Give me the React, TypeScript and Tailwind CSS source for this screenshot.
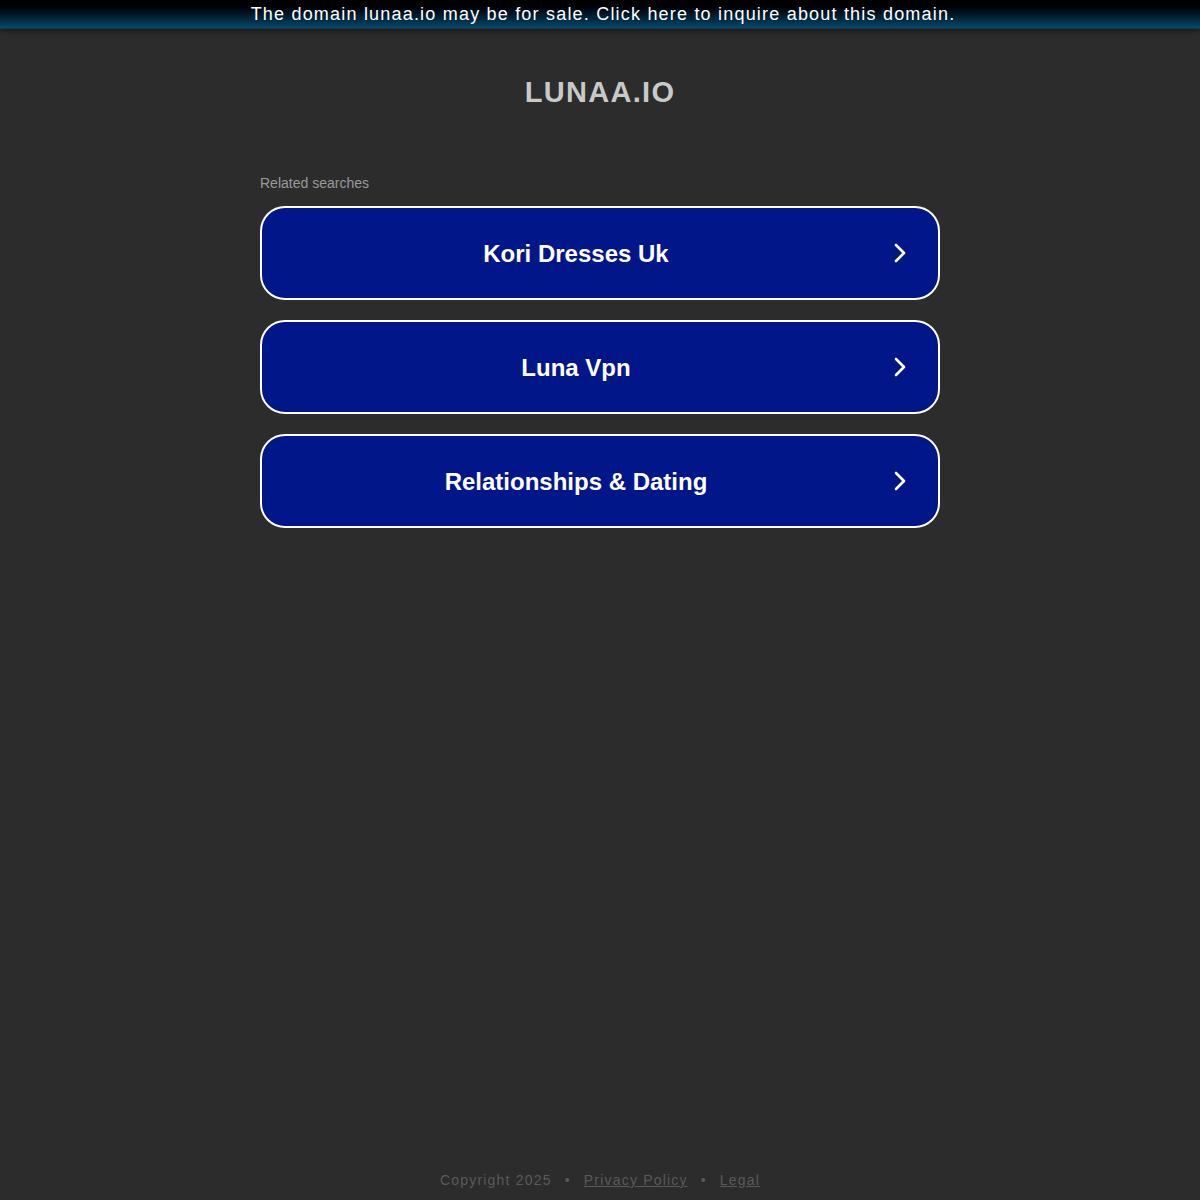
import React from 'react';

const searches = ['Kori Dresses Uk', 'Luna Vpn', 'Relationships & Dating'];

function Chevron() {
  return (
    <svg width="14" height="22" viewBox="0 0 14 22" fill="none" className="shrink-0">
      <path d="M3 3l8 8-8 8" stroke="#ffffff" strokeWidth="2.6" strokeLinecap="round" strokeLinejoin="round" />
    </svg>
  );
}

export default function App() {
  return (
    <div
      className="min-h-screen flex flex-col bg-[#2c2c2c]"
      style={{ fontFamily: '"Liberation Sans", Arial, sans-serif' }}
    >
      {/* Sale banner */}
      <div className="h-[29px] flex items-center justify-center pl-[6px] bg-gradient-to-b from-[#000000] to-[#044a6e] border-b border-[#16384a] shadow-[0_2px_6px_rgba(0,0,0,0.5)]">
        <a className="text-white text-[18px] tracking-[1.2px] leading-none cursor-pointer">
          The domain lunaa.io may be for sale. Click here to inquire about this domain.
        </a>
      </div>

      <div className="flex-1 w-[680px] mx-auto flex flex-col">
        {/* Title */}
        <h1 className="text-center text-[29px] font-bold text-[#c9c9c9] tracking-[1.3px] mt-[49px] leading-none">
          LUNAA.IO
        </h1>

        {/* Related searches */}
        <p className="text-[14px] text-[#9a9a9a] mt-[69px] mb-[16px] leading-none">Related searches</p>

        <div className="flex flex-col gap-[20px]">
          {searches.map((s) => (
            <a
              key={s}
              className="h-[94px] flex items-center rounded-[25px] border-2 border-white bg-[#011689] pr-[31px] cursor-pointer"
            >
              <span className="flex-1 text-center text-white text-[24px] font-bold pt-[2px]">{s}</span>
              <span className="ml-[3px] flex">
                <Chevron />
              </span>
            </a>
          ))}
        </div>
      </div>

      {/* Footer */}
      <footer className="pb-[9px] text-center text-[14px] text-[#5a5a5a] tracking-[1.2px]">
        <span>Copyright 2025</span>
        <span className="mx-[13px]">•</span>
        <a className="underline cursor-pointer">Privacy Policy</a>
        <span className="mx-[13px]">•</span>
        <a className="underline cursor-pointer">Legal</a>
      </footer>
    </div>
  );
}
